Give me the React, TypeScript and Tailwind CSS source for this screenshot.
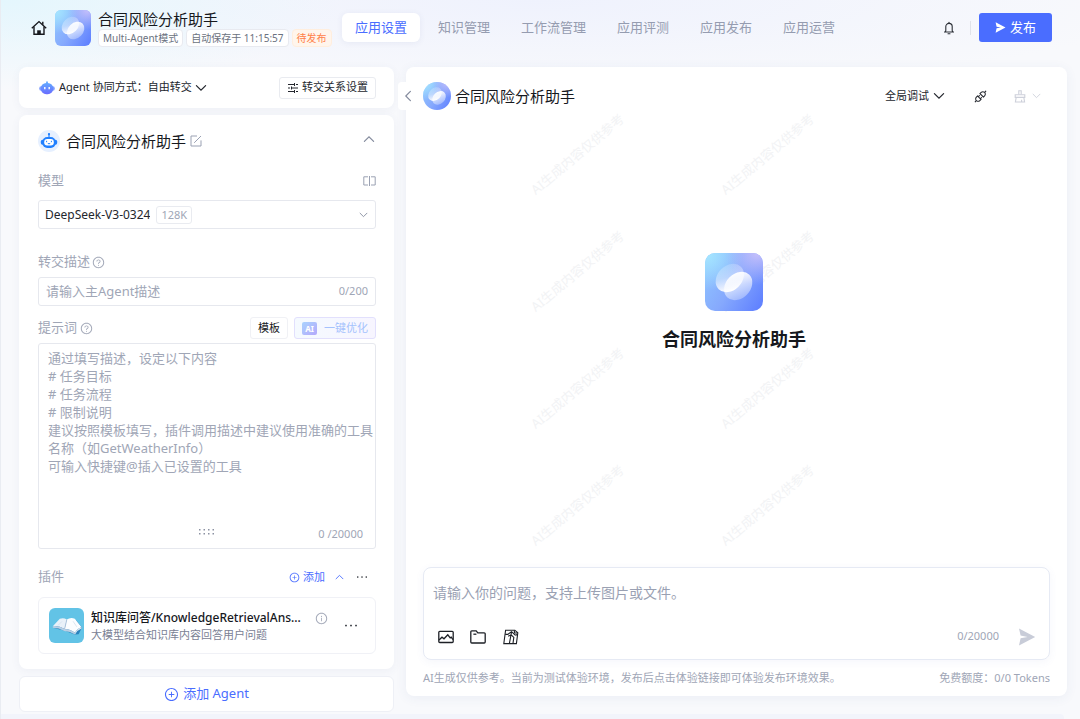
import { useId } from "react";
import { AiOutlineApi, AiOutlineInfoCircle, AiOutlinePlusCircle, AiOutlineQuestionCircle } from "react-icons/ai";

const APP_NAME = "合同风险分析助手";

const TABS = ["应用设置", "知识管理", "工作流管理", "应用评测", "应用发布", "应用运营"];

const PROMPT_PLACEHOLDER = [
  "通过填写描述，设定以下内容",
  "# 任务目标",
  "# 任务流程",
  "# 限制说明",
  "建议按照模板填写，插件调用描述中建议使用准确的工具",
  "名称（如GetWeatherInfo）",
  "可输入快捷键@插入已设置的工具",
].join("\n");

interface IconProps {
  className?: string;
}

function AppLogo(props: IconProps) {
  const id = useId();

  return (
    <svg viewBox="0 0 58 58" className={props.className} aria-hidden="true">
      <defs>
        <linearGradient id={id + "base"} x1="0" y1="0.2" x2="1" y2="0.8">
          <stop offset="0" stopColor="#8fc4ff" />
          <stop offset="0.5" stopColor="#86a9fd" />
          <stop offset="1" stopColor="#6283ff" />
        </linearGradient>
        <radialGradient id={id + "cyan"} cx="0.05" cy="0.05" r="0.6">
          <stop offset="0" stopColor="#a4e4ff" />
          <stop offset="1" stopColor="#a4e4ff" stopOpacity="0" />
        </radialGradient>
        <radialGradient id={id + "violet"} cx="0.9" cy="0" r="0.55">
          <stop offset="0" stopColor="#c6bffb" />
          <stop offset="1" stopColor="#b5b5fb" stopOpacity="0" />
        </radialGradient>
        <linearGradient id={id + "a"} x1="0.85" y1="0" x2="0.15" y2="1">
          <stop offset="0" stopColor="#fff" stopOpacity="0.15" />
          <stop offset="0.45" stopColor="#fff" stopOpacity="0.4" />
          <stop offset="0.9" stopColor="#fff" stopOpacity="1" />
        </linearGradient>
        <linearGradient id={id + "b"} x1="0.85" y1="0" x2="0.15" y2="1">
          <stop offset="0.1" stopColor="#fff" stopOpacity="0.95" />
          <stop offset="0.5" stopColor="#fff" stopOpacity="0.6" />
          <stop offset="1" stopColor="#fff" stopOpacity="0.25" />
        </linearGradient>
      </defs>
      <rect width="58" height="58" fill={`url(#${id}base)`} />
      <rect width="58" height="58" fill={`url(#${id}cyan)`} />
      <rect width="58" height="58" fill={`url(#${id}violet)`} />
      <ellipse cx="24.8" cy="25" rx="15.8" ry="12.2" transform="rotate(-45 24.8 25)" fill={`url(#${id}a)`} />
      <ellipse cx="33.2" cy="33" rx="15.8" ry="12.2" transform="rotate(-45 33.2 33)" fill={`url(#${id}b)`} />
    </svg>
  );
}

function ChevronIcon(props: IconProps) {
  return (
    <svg
      viewBox="0 0 12 8"
      className={props.className}
      fill="none"
      stroke="currentColor"
      strokeWidth="1.2"
      strokeLinecap="round"
      aria-hidden="true"
    >
      <path d="M1.4 1.6 6 6.2l4.6-4.6" />
    </svg>
  );
}

function HomeIcon() {
  return (
    <svg viewBox="0 0 16 16" className="h-4 w-4" fill="none" stroke="#16181d" strokeWidth="1.4" aria-hidden="true">
      <path d="M0.8 8.2 8 1.6l7.2 6.6" />
      <path d="M3 6.8v7.5h10V6.8" />
      <path d="M11.8 4.8V1.8" />
      <path d="M6.2 14.3v-4h3.6v4z" fill="#16181d" stroke="none" />
    </svg>
  );
}

function BellIcon() {
  return (
    <svg viewBox="0 0 14 14" className="h-3.5 w-3.5" fill="none" stroke="#2b2f36" strokeWidth="1.1" aria-hidden="true">
      <path d="M2 11h10M3.4 11l0.4-1.6V5.6a3.2 3.2 0 0 1 6.4 0v3.8l0.4 1.6" />
      <path d="M7 2.2V1.2M6 12.8h2" strokeLinecap="round" />
    </svg>
  );
}

function SendIcon(props: IconProps) {
  return (
    <svg viewBox="0 0 18 18" className={props.className} fill="currentColor" aria-hidden="true">
      <path d="M1 0.6 17.2 9 1 17.4 2.6 10.2 9.6 9 2.6 7.6z" />
    </svg>
  );
}

// small blue agent head next to the collaboration mode
function AgentsIcon() {
  return (
    <svg viewBox="0 0 16 14" className="h-3.5 w-4" aria-hidden="true">
      <defs>
        <linearGradient id="agents-head" x1="0" y1="0" x2="0" y2="1">
          <stop offset="0" stopColor="#62a8ff" />
          <stop offset="1" stopColor="#6a6cff" />
        </linearGradient>
      </defs>
      <path d="M8 0.4v2" stroke="#62a8ff" strokeWidth="1.8" />
      <rect x="0.2" y="5.2" width="15.6" height="4.6" rx="2" fill="#7f9dff" />
      <rect x="1.8" y="2" width="12.4" height="11.2" rx="5.4" fill="url(#agents-head)" />
      <path d="M5.8 6v2.2M10.2 6v2.2" stroke="#fff" strokeWidth="1.4" />
    </svg>
  );
}

function RobotIcon() {
  return (
    <svg viewBox="0 0 22 22" className="h-[22px] w-[22px]" aria-hidden="true">
      <circle cx="11" cy="11" r="11" fill="#e6f0ff" />
      <path d="M11 3.6v4" stroke="#2080ff" strokeWidth="1.2" />
      <circle cx="11" cy="4.2" r="1.1" fill="#2080ff" />
      <rect x="2.8" y="9.8" width="16.4" height="5" rx="1.8" fill="#2080ff" />
      <rect x="4.4" y="7" width="13.2" height="11" rx="4.8" fill="#2080ff" />
      <rect x="6.2" y="9" width="9.6" height="6.6" rx="3" fill="#fff" />
      <path d="M8.6 10.8v1.4M13.4 10.8v1.4M9.8 13.4q1.2 0.9 2.4 0" stroke="#2080ff" strokeWidth="1" fill="none" />
    </svg>
  );
}

function SlidersIcon() {
  return (
    <svg viewBox="0 0 12 12" className="h-3 w-3" stroke="#23262d" strokeWidth="1" aria-hidden="true">
      <path d="M1 2.5h6M9 2.5h2M1 6h2M5 6h6M1 9.5h6M9 9.5h2M7.5 1v3M4.5 4.5v3M7.5 8v3" />
    </svg>
  );
}

function EditIcon() {
  return (
    <svg viewBox="0 0 12 12" className="h-3 w-3" fill="none" stroke="#9aa1b3" strokeWidth="1" aria-hidden="true">
      <path d="M7 1H1v10h10V5.4" />
      <path d="M4.2 7.8 11 1" />
    </svg>
  );
}

function CompareIcon() {
  return (
    <svg viewBox="0 0 13 12" className="h-3 w-[13px]" fill="none" stroke="#9aa1b3" strokeWidth="1" aria-hidden="true">
      <path d="M5 1.8H0.8v8.2H5M8 1.8h4.2v8.2H8M6.5 1v10" />
    </svg>
  );
}

function BrushIcon() {
  return (
    <svg viewBox="0 0 12 13" className="h-[13px] w-3" fill="none" stroke="currentColor" strokeWidth="1.1" aria-hidden="true">
      <path d="M4.8 4.6V0.8h2.4v3.8" />
      <path d="M1.2 7.4V4.8h9.6v2.6z" />
      <path d="M2.2 7.4 1.4 12h9.2l-0.8-4.6M7.6 12V9.8" />
    </svg>
  );
}

function DotsIcon(props: IconProps) {
  return (
    <svg viewBox="0 0 12 4" className={props.className} fill="#2b2f36" aria-hidden="true">
      <rect x="1" y="1.4" width="1.4" height="1.3" />
      <rect x="5.3" y="1.4" width="1.4" height="1.3" />
      <rect x="9.6" y="1.4" width="1.4" height="1.3" />
    </svg>
  );
}

function BookIcon() {
  return (
    <svg viewBox="0 0 35 35" className="h-[35px] w-[35px] shrink-0 rounded-md bg-[#62c3e6]" aria-hidden="true">
      <path d="M5 20 11 12l16 0 6 7.4-3.4 6.8-4 0.4-9-3.6z" fill="#2a83bd" />
      <path d="M3.8 18.2 10.8 10.8q3.8-1.4 7 0.8L15.6 21q-5.4-3.4-11.8-2.8z" fill="#e9f1f9" />
      <path d="M17.8 11.6q3.8-2.6 8-0.8l6.8 8.4q-4.4 1-6.6 5.6-4.6-3.8-10.4-3.8z" fill="#fbfdff" />
      <path d="M3.8 18.2q6.4-0.6 11.8 2.8 5.8 0 10.4 3.8v1.6q-5-3.2-10.8-3.4-5.2-3.2-11.4-3.2z" fill="#b9cfe4" />
      <path d="M26 24.8q2.2-4.6 6.6-5.6v1.4q-4 1.4-6.6 5.8z" fill="#d5e3f0" />
      <path d="M17.8 11.6 15.6 21" stroke="#a9c0d8" strokeWidth="0.9" fill="none" />
      <path d="M13 13.4l-4 4M24 13.2l3.8 5.6" stroke="#d3e0ee" strokeWidth="0.8" fill="none" />
    </svg>
  );
}

function ImageIcon() {
  return (
    <svg viewBox="0 0 16 14" className="h-3.5 w-4" fill="none" stroke="#1d2026" strokeWidth="1.3" aria-hidden="true">
      <rect x="0.8" y="1.3" width="14.4" height="11.2" rx="1" />
      <path d="M1 10l3-2.8 2 1.6 3.8-4 2.4 3 1-0.6 1.8 2.4" />
    </svg>
  );
}

function FolderIcon() {
  return (
    <svg viewBox="0 0 16 14" className="h-3.5 w-4" fill="none" stroke="#1d2026" strokeWidth="1.3" aria-hidden="true">
      <path d="M0.8 12V1.8q0-1 1-1h4.4l1.6 2h6.4q1 0 1 1V12q0 1-1 1H1.8q-1 0-1-1z" />
      <path d="M3.4 4.2h3" />
    </svg>
  );
}

function MapIcon() {
  return (
    <svg viewBox="0 0 16 16" className="h-4 w-4" fill="none" stroke="#1d2026" strokeWidth="1.1" aria-hidden="true">
      <path d="M2.6 1.2h9.2l3 2.6-1.4 10.8H0.8z" />
      <path d="M2.2 5.4h2.6L8.6 2.6l3.6 3.6M8.6 2.6 6.4 14.4M5.2 7.2l3-1.4 2.6 2.6L10 14.4M12.2 6.2l2-0.6" />
      <path d="M11.4 1.2v2.8h3.2" />
    </svg>
  );
}

function Header() {
  return (
    <header className="grid h-[67px] grid-cols-[311px_1fr_auto] items-center pr-7 pb-3 pl-[30px]">
      <div className="flex items-center">
        <a href="#home" aria-label="首页">
          <HomeIcon />
        </a>
        <AppLogo className="ml-2 h-9 w-9 shrink-0 rounded-md" />
        <div className="ml-[7px] pt-0.5 whitespace-nowrap">
          <h1 className="text-[15px] leading-[19px] text-[#16181d]">{APP_NAME}</h1>
          <div className="flex gap-[3px] text-[10px] leading-4 text-[#6b7280]">
            <span className="rounded-sm border border-[#e8eaf0] bg-white px-1">Multi-Agent模式</span>
            <span className="rounded-sm border border-[#e8eaf0] bg-white px-1">自动保存于 11:15:57</span>
            <span className="rounded-sm border border-[#ffeede] bg-[#fff5ec] px-1 text-[#ff8048]">待发布</span>
          </div>
        </div>
      </div>
      <nav className="flex gap-[5px] text-[13px] whitespace-nowrap">
        {TABS.map((tab, index) => (
          <a
            key={tab}
            href={"#tab-" + index}
            className={
              "flex h-[29px] items-center rounded-md px-[13px] " +
              (index === 0 ? "bg-white text-[#4a6dff] shadow-[0_1px_6px_rgba(60,80,140,0.08)]" : "text-[#959cb0]")
            }
          >
            {tab}
          </a>
        ))}
      </nav>
      <div className="flex items-center">
        <button aria-label="通知">
          <BellIcon />
        </button>
        <div className="mr-2 ml-3.5 h-3.5 w-px bg-[#e0e3ea]" />
        <button className="flex h-[29px] items-center gap-1 rounded-[3px] bg-[#4a6dff] px-4 text-[13px] text-white">
          <SendIcon className="h-[11px] w-[11px]" />
          发布
        </button>
      </div>
    </header>
  );
}

function AgentPanel() {
  return (
    <section className="rounded-lg bg-white pt-[15px] pr-[18px] pb-[15px] pl-[19px] shadow-[0_2px_10px_rgba(60,80,140,0.06)]">
      <div className="flex h-[22px] items-center">
        <RobotIcon />
        <h2 className="ml-1.5 text-[15px] text-[#16181d]">{APP_NAME}</h2>
        <button className="ml-1" aria-label="编辑名称">
          <EditIcon />
        </button>
        <button className="mr-px mb-1 ml-auto text-[#858c9e]" aria-label="收起">
          <ChevronIcon className="h-2 w-3 rotate-180" />
        </button>
      </div>

      <div className="mt-[19px] flex h-5 items-center justify-between">
        <label htmlFor="model" className="text-[13px] text-[#a0a6b6]">
          模型
        </label>
        <button aria-label="模型对比">
          <CompareIcon />
        </button>
      </div>
      <div className="mt-[9px] flex h-[29px] items-center rounded-[3px] border border-[#e6e8ee] px-1.5">
        <select id="model" className="field-sizing-content appearance-none bg-transparent text-xs text-[#23262d] outline-none">
          <option>DeepSeek-V3-0324</option>
        </select>
        <span className="ml-1.5 rounded-[3px] border border-[#e9ebf0] px-1 text-[11px] leading-4 text-[#a0a6b6]">128K</span>
        <ChevronIcon className="mr-px ml-auto h-1.5 w-[9px] text-[#858c9e]" />
      </div>

      <div className="mt-[23px] flex h-5 items-center gap-0.5 text-[13px] text-[#a0a6b6]">
        <label htmlFor="handoff">转交描述</label>
        <AiOutlineQuestionCircle size={13} />
      </div>
      <div className="mt-[5px] flex h-[29px] items-center rounded-[3px] border border-[#e6e8ee] px-[7px]">
        <input
          id="handoff"
          placeholder="请输入主Agent描述"
          className="min-w-0 flex-1 text-[13px] outline-none placeholder:text-[#a0a6b6]"
        />
        <span className="text-[11px] text-[#a0a6b6]">0/200</span>
      </div>

      <div className="mt-[11px] flex h-[22px] items-center text-[13px] text-[#a0a6b6]">
        <label htmlFor="prompt">提示词</label>
        <AiOutlineQuestionCircle size={13} className="ml-[3px]" />
        <button className="ml-auto h-[22px] rounded-[3px] border border-[#f0f1f5] px-[7px] text-[11px] text-[#16181d]">
          模板
        </button>
        <button className="ml-1.5 flex h-[22px] items-center gap-[7px] rounded-[3px] border border-[#e2e0fd] bg-linear-to-r from-[#f5faff] to-[#f7f5ff] px-[7px] text-[11px] text-[#a5c2fd]">
          <span className="h-[13px] w-[15px] rounded-xs bg-linear-to-br from-[#a9d3fe] to-[#b3a8fb] text-center text-[8px] leading-[13px] font-bold text-white">
            AI
          </span>
          一键优化
        </button>
      </div>
      <div className="mt-1 rounded-[3px] border border-[#e6e8ee] pt-[5px] pb-1">
        <textarea
          id="prompt"
          placeholder={PROMPT_PLACEHOLDER}
          className="block h-[171px] w-full resize-none pr-0.5 pl-[9px] text-[13px] leading-[18px] outline-none placeholder:text-[#a0a6b6]"
        />
        <div className="grid h-6 grid-cols-[1fr_auto_1fr] items-center px-3">
          <svg viewBox="0 0 16 6" className="col-start-2 h-1.5 w-4" fill="#8b91a2" aria-hidden="true">
            {[0, 4.5, 9, 13.5].map((x) => (
              <g key={x}>
                <rect x={x} y="0" width="1.5" height="1.5" />
                <rect x={x} y="4" width="1.5" height="1.5" />
              </g>
            ))}
          </svg>
          <span className="pt-1 text-right text-[11px] text-[#a0a6b6]">0 /20000</span>
        </div>
      </div>

      <div className="mt-[18px] flex h-5 items-center">
        <h3 className="text-[13px] text-[#a0a6b6]">插件</h3>
        <button className="ml-auto flex items-center gap-[3px] text-[11px] text-[#4a6dff]">
          <AiOutlinePlusCircle size={11} />
          添加
        </button>
        <button className="ml-2.5 text-[#4a6dff]" aria-label="收起插件">
          <ChevronIcon className="h-1.5 w-[9px] rotate-180" />
        </button>
        <button className="mr-2 ml-3" aria-label="更多">
          <DotsIcon className="h-1 w-3" />
        </button>
      </div>
      <div className="mt-2.5 flex h-[57px] items-center rounded-md border border-[#f0f1f6] px-2.5">
        <BookIcon />
        <div className="ml-[7px] w-[214px] min-w-0">
          <p className="truncate text-xs leading-[17px] font-medium text-[#16181d]">
            知识库问答/KnowledgeRetrievalAns...
          </p>
          <p className="truncate text-[11px] leading-[17px] text-[#7a8194]">大模型结合知识库内容回答用户问题</p>
        </div>
        <AiOutlineInfoCircle size={13} color="#a0a6b6" className="mb-3.5 ml-2.5" />
        <button className="ml-4" aria-label="插件操作">
          <DotsIcon className="h-[5px] w-3.5" />
        </button>
      </div>
    </section>
  );
}

function ChatPanel() {
  return (
    <section className="relative mb-4 flex min-w-0 flex-1 flex-col rounded-lg bg-white px-[17px] pt-[15px] pb-2 shadow-[0_2px_12px_rgba(60,80,140,0.07)]">
      {/* watermark tiles, kept under the content */}
      <div
        className="pointer-events-none absolute top-7 left-[76px] grid auto-rows-[117px] grid-cols-[190px_190px] place-items-center text-[13px] leading-4 text-[#f2f3f5] select-none"
        aria-hidden="true"
      >
        {Array.from({ length: 8 }, (_, i) => (
          <span key={i} className="-rotate-40 whitespace-nowrap">
            AI生成内容仅供参考
          </span>
        ))}
      </div>

      <button
        className="absolute top-[15px] -left-2 flex h-7 w-4 items-center justify-end rounded-l bg-white text-[#858c9e]"
        aria-label="收起配置"
      >
        <ChevronIcon className="h-2 w-3 rotate-90" />
      </button>
      <div className="relative flex h-7 items-center">
        <AppLogo className="h-7 w-7 rounded-full" />
        <h2 className="ml-1 text-[15px] text-[#16181d]">{APP_NAME}</h2>
        <div className="ml-auto flex items-center gap-1 text-[#23262d]">
          <select
            aria-label="调试范围"
            className="field-sizing-content appearance-none bg-transparent text-[11px] outline-none"
          >
            <option>全局调试</option>
          </select>
          <ChevronIcon className="h-2 w-3" />
        </div>
        <button className="ml-7" aria-label="连接">
          <AiOutlineApi size={15} color="#23262d" />
        </button>
        <button className="mr-[9px] ml-[26px] flex items-center gap-1.5 text-[#cdd0da]" aria-label="清空对话">
          <BrushIcon />
          <ChevronIcon className="h-1.5 w-[9px]" />
        </button>
      </div>

      <div className="relative flex flex-1 flex-col items-center pt-[143px] pr-[5px]">
        <AppLogo className="h-[58px] w-[58px] rounded-[10px]" />
        <h2 className="mt-4 text-lg leading-6 font-bold text-[#16181d]">{APP_NAME}</h2>
      </div>

      <div className="relative rounded-lg border border-[#e6eaf4] px-[9px] pt-4 pb-[7px] shadow-[0_2px_8px_rgba(80,110,180,0.06)]">
        <textarea
          aria-label="问题"
          placeholder="请输入你的问题，支持上传图片或文件。"
          className="block h-9 w-full resize-none text-sm leading-[18px] outline-none placeholder:text-[#9aa1b3]"
        />
        <div className="flex h-8 items-center pt-px pl-[5px]">
          <button aria-label="上传图片">
            <ImageIcon />
          </button>
          <button className="ml-4" aria-label="上传文件">
            <FolderIcon />
          </button>
          <button className="ml-[17px]" aria-label="知识地图">
            <MapIcon />
          </button>
          <span className="ml-auto text-[11px] text-[#a0a6b6]">0/20000</span>
          <button className="mr-1 ml-[19px] text-[#c8ccd8]" aria-label="发送">
            <SendIcon className="h-[18px] w-[18px]" />
          </button>
        </div>
      </div>
      <div className="mt-2 flex justify-between text-[11px] leading-5 text-[#a0a6b6]">
        <p>AI生成仅供参考。当前为测试体验环境，发布后点击体验链接即可体验发布环境效果。</p>
        <p className="whitespace-nowrap">免费额度：0/0 Tokens</p>
      </div>
    </section>
  );
}

function App() {
  return (
    <div className="flex min-h-screen flex-col border-l border-[#e9ecf2] bg-[#f8f9fc] bg-[radial-gradient(ellipse_340px_90px_at_0_0,#e4f6fd,transparent),radial-gradient(ellipse_620px_90px_at_50%_0,#eff2fd,transparent)] font-['Noto_Sans','Noto_Sans_CJK_SC',sans-serif]">
      <Header />
      <main className="flex flex-1 gap-3 pr-[13px] pb-[2px] pl-[18px]">
        <div className="flex w-[375px] shrink-0 flex-col gap-[7px]">
          <section className="flex h-[41px] items-center rounded-lg bg-white pr-[18px] pl-5 text-[11px] text-[#23262d] shadow-[0_2px_10px_rgba(60,80,140,0.06)]">
            <AgentsIcon />
            <label htmlFor="mode" className="ml-1">
              Agent 协同方式：
            </label>
            <select id="mode" className="field-sizing-content appearance-none bg-transparent outline-none">
              <option>自由转交</option>
            </select>
            <ChevronIcon className="ml-[3px] h-2 w-3" />
            <button className="ml-auto flex h-[22px] items-center gap-[3px] rounded-[3px] border border-[#e9ebf0] px-[7px]">
              <SlidersIcon />
              转交关系设置
            </button>
          </section>
          <AgentPanel />
          <button className="flex h-9 items-center justify-center gap-1 rounded-md border border-[#eef0f6] bg-white text-[13px] text-[#4a6dff]">
            <AiOutlinePlusCircle size={15} />
            添加 Agent
          </button>
        </div>
        <ChatPanel />
      </main>
      <div className="mr-4 h-[5px] rounded-tr bg-[#f2f4fb]" />
    </div>
  );
}

export default App;
